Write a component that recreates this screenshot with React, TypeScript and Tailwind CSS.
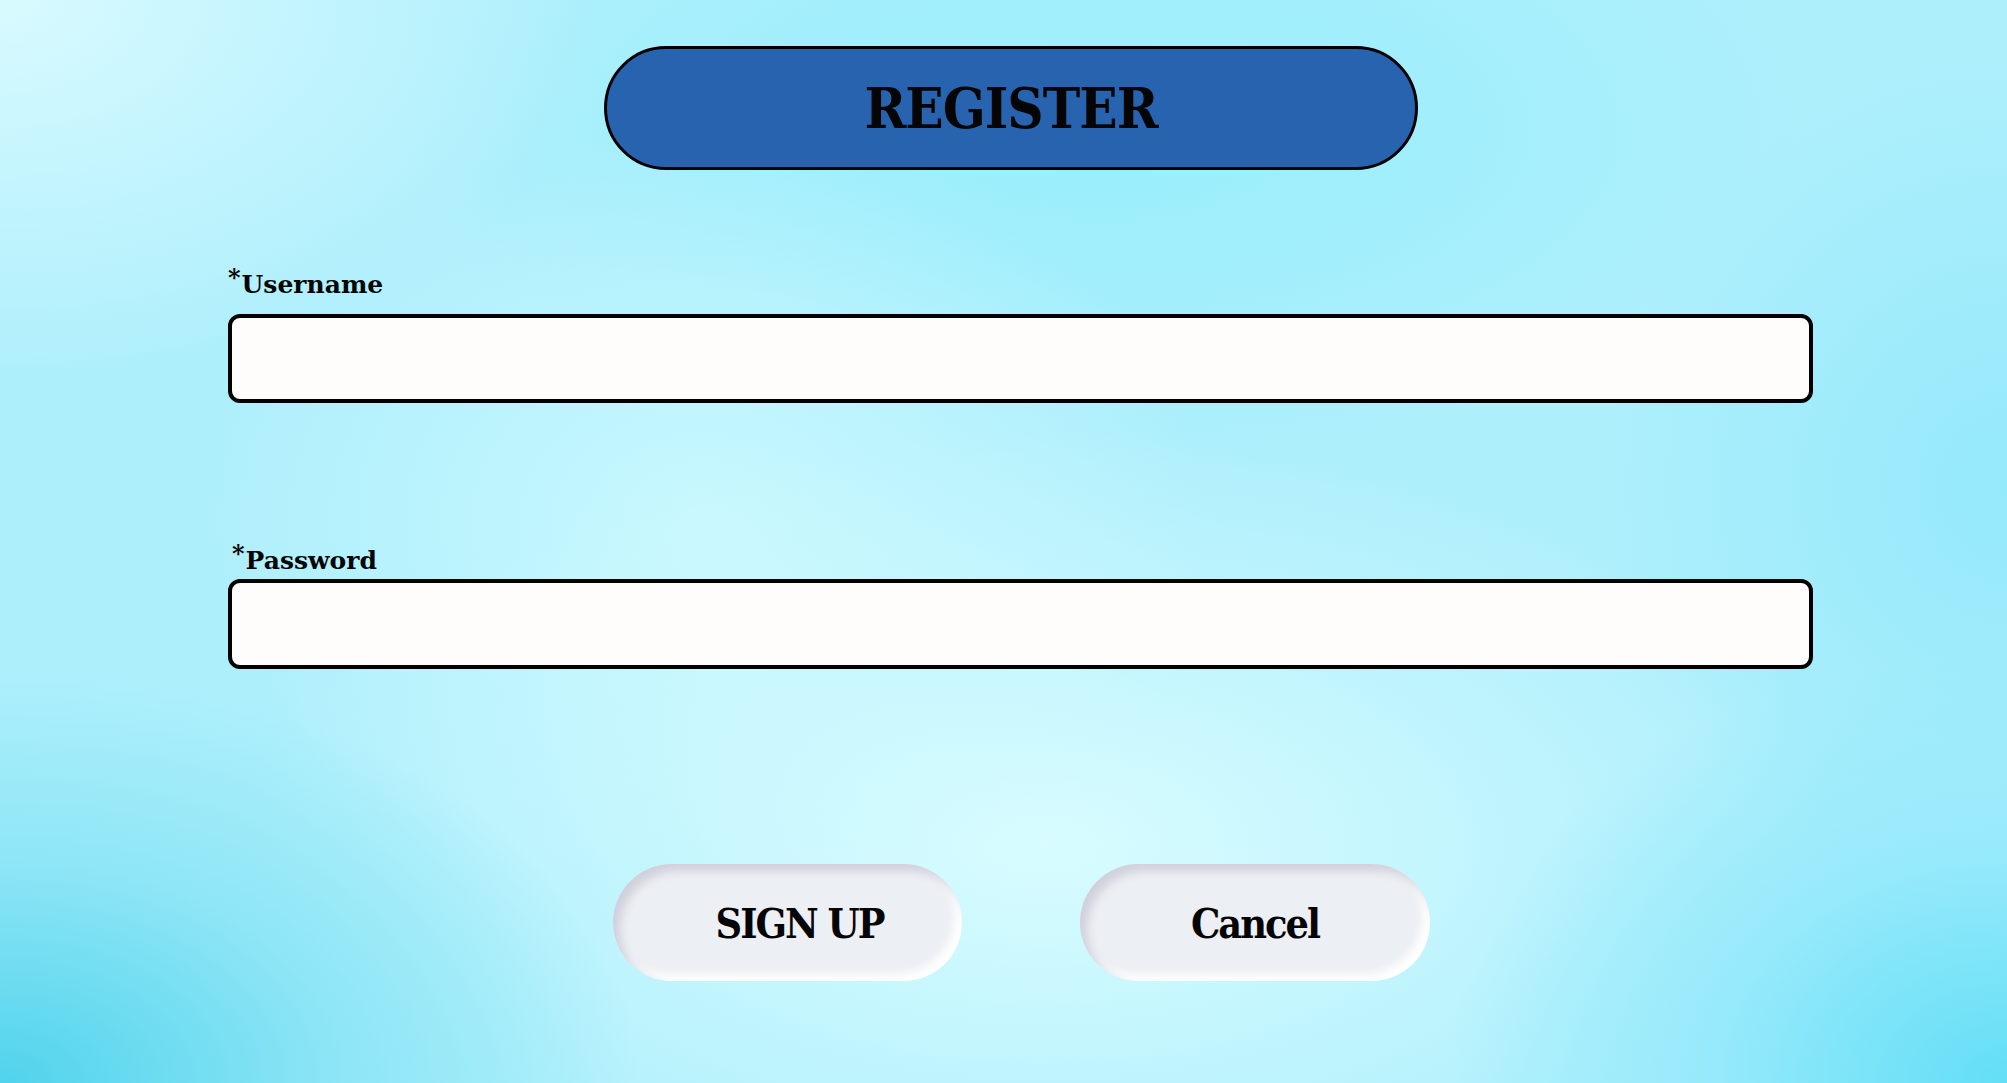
import React from "react";

export default function App() {
  return (
    <div className="w-full h-[1083px] overflow-hidden bg-[#aeeffc] bg-[radial-gradient(ellipse_32%_38%_at_0%_100%,#50d3ec_0%,#8fe6f6_55%,transparent_100%),radial-gradient(ellipse_28%_40%_at_100%_100%,#62def6_0%,#98eafb_55%,transparent_100%),radial-gradient(ellipse_30%_35%_at_0%_0%,#d8faff_0%,transparent_100%),radial-gradient(ellipse_40%_38%_at_52%_78%,#d8fcff_0%,transparent_100%),radial-gradient(ellipse_25%_35%_at_35%_48%,#c8f8fe_0%,transparent_100%),radial-gradient(ellipse_35%_30%_at_55%_12%,#98eefc_0%,transparent_100%),radial-gradient(ellipse_20%_40%_at_100%_45%,#94e9fb_0%,transparent_100%)] pt-[46px] font-['DejaVu_Serif',serif] text-[#050505]">
      <div className="ml-[604px] w-[814px] h-[124px] rounded-full border-[3px] border-black bg-[#2863b0] flex items-center justify-center">
        <span className="text-[56px] leading-none font-bold [font-stretch:condensed] [letter-spacing:-1px]">
          REGISTER
        </span>
      </div>

      <div className="ml-[228px] w-[1585px]">
        <label className="block mt-[100px] text-[25px] leading-[30px] font-bold">
          <span className="relative top-[-7px] text-[24px] mr-[1px]">*</span>
          Username
        </label>
        <div className="mt-[14px] h-[89px] w-full rounded-[12px] border-4 border-black bg-[#fefdfb]" />

        <label className="block mt-[143px] ml-[4px] text-[25px] leading-[30px] font-bold">
          <span className="relative top-[-7px] text-[24px] mr-[1px]">*</span>
          Password
        </label>
        <div className="mt-[3px] h-[90px] w-full rounded-[12px] border-4 border-black bg-[#fefdfb]" />
      </div>

      <div className="ml-[613px] mt-[195px] flex gap-[118px]">
        <button className="w-[349px] h-[117px] rounded-full bg-[#eceff3] shadow-[inset_7px_7px_10px_#cfd0dc,inset_-7px_-7px_10px_#ffffff] flex items-center justify-center pl-[24px] pt-[4px] text-[41px] font-bold [font-stretch:condensed] [letter-spacing:-2px] leading-none">
          SIGN UP
        </button>
        <button className="w-[350px] h-[117px] rounded-full bg-[#eceff3] shadow-[inset_7px_7px_10px_#cfd0dc,inset_-7px_-7px_10px_#ffffff] flex items-center justify-center pt-[4px] text-[41px] font-bold [font-stretch:condensed] [letter-spacing:-2px] leading-none">
          Cancel
        </button>
      </div>
    </div>
  );
}
